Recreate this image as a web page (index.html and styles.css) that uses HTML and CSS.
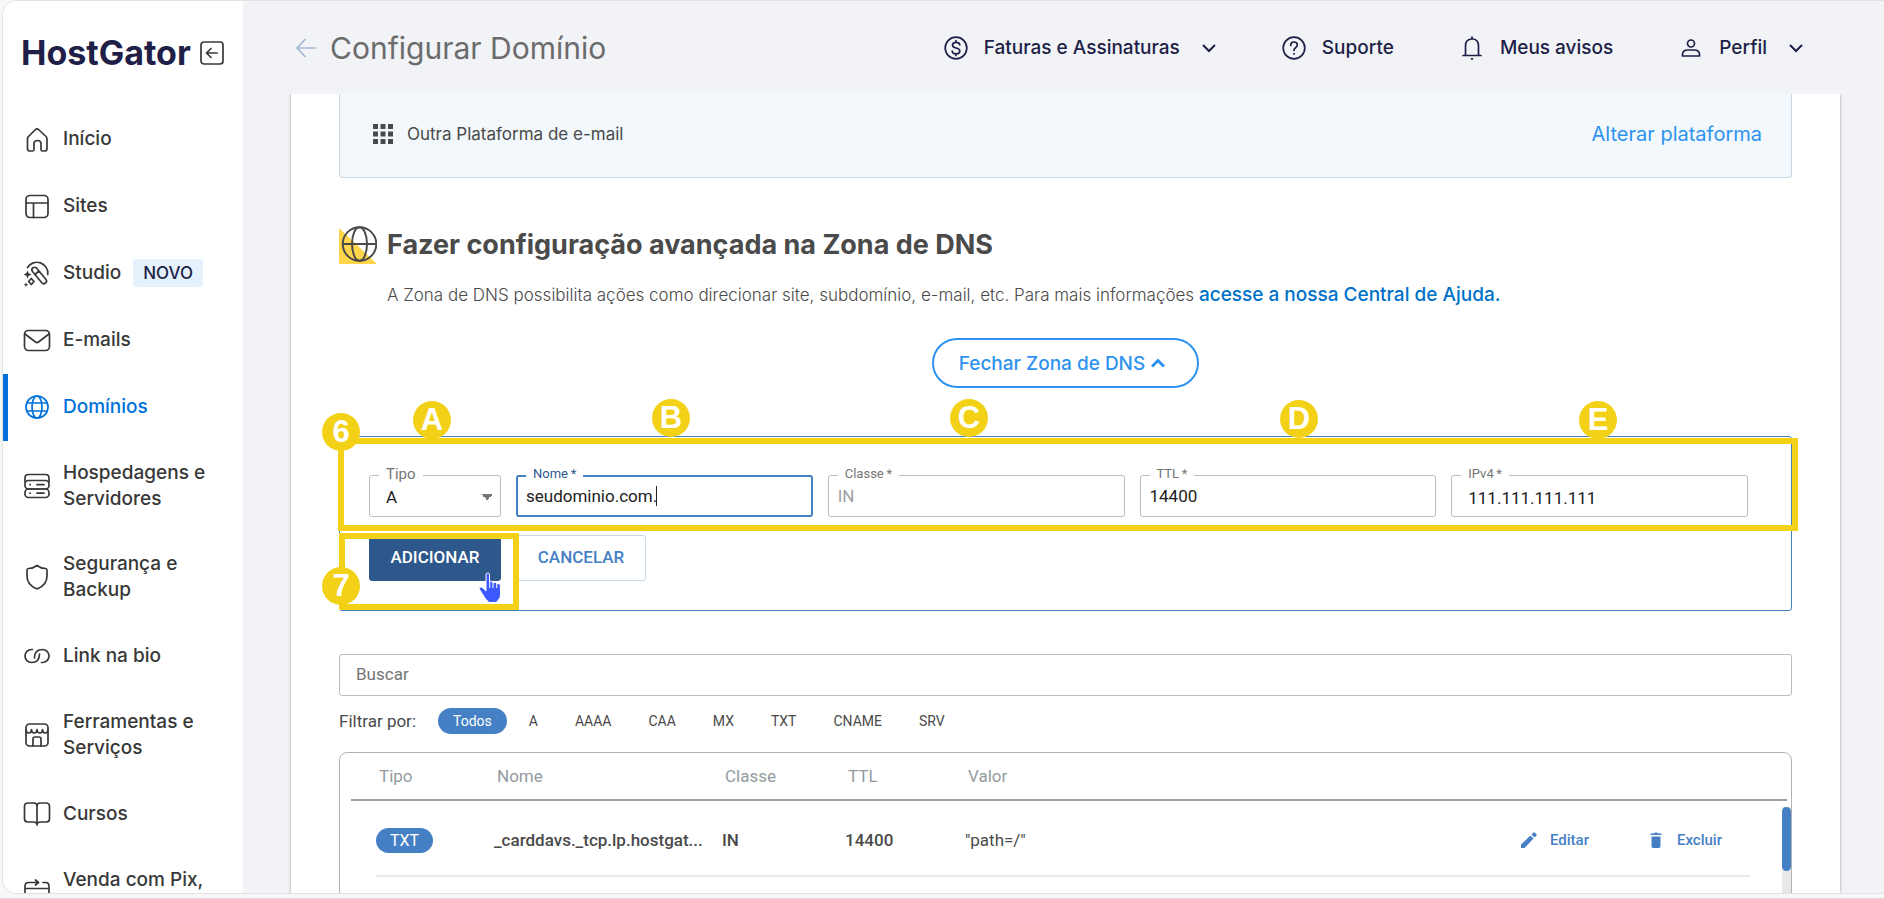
FILE: index.html
```html
<!DOCTYPE html>
<html lang="pt-BR">
<head>
  <meta charset="UTF-8">
  <meta name="viewport" content="width=device-width, initial-scale=1">
  <title>Configurar Domínio - HostGator</title>
  <link rel="stylesheet" href="styles.css">
</head>
<body>

  <div class="app">

    <aside class="sidebar">
      <div class="brand">
        <a href="#" class="logo">HostGator</a>
        <button type="button" class="icon-btn" aria-label="Recolher menu">
          <svg class="icon" viewBox="0 0 24 24"><rect x="1" y="1" width="22" height="22" rx="3"/><path d="M17 12H7M11 7.500L6.500 12l4.500 4.500"/></svg>
        </button>
      </div>

      <nav class="menu">
        <a href="#" class="menu-item">
          <svg class="icon" viewBox="0 0 28 28"><path d="M5 12L12.500 4.500Q14 3.200 15.500 4.500L23 11.500Q24 12.500 24 14V23.500Q24 26 21.500 26H19.500Q18 26 18 24.500V18.500Q18 15.500 14.500 15.500Q11 15.500 11 18.500V24.500Q11 26 9.500 26H7Q4.500 26 4.500 23.500V14Q4.500 12.700 5 12Z"/></svg>
          <span>Início</span>
        </a>
        <a href="#" class="menu-item">
          <svg class="icon" viewBox="0 0 28 28"><rect x="3" y="3.500" width="22" height="22" rx="4"/><path d="M3 11H25M10.500 11V25.500"/></svg>
          <span>Sites</span>
        </a>
        <a href="#" class="menu-item">
          <svg class="icon" viewBox="0 0 28 28"><path d="M4.500 8.500A11 11 0 0 1 24.800 15.500M9.500 12.500L19 24Q20.500 25.500 22.500 24Q24.500 22.500 23 20.500L13.500 9Q11.500 7.500 9.700 9Q8 10.500 9.500 12.500ZM12.500 15L16 11.800M8.300 19.500L11 22.500L8.300 25.500L5.600 22.500Z"/><path class="fill" d="M4.500 11.500l1.200 2.800 2.800 1.200-2.800 1.200-1.200 2.800-1.200-2.800L.5 15.500l2.800-1.200zM3 23.500l.7 1.500 1.500.7-1.500.7-.7 1.500-.7-1.500-1.500-.7 1.500-.7z"/></svg>
          <span>Studio</span>
          <span class="tag">NOVO</span>
        </a>
        <a href="#" class="menu-item">
          <svg class="icon" viewBox="0 0 28 28"><rect x="1.500" y="4.500" width="25" height="20" rx="4"/><path d="M2 8L12.500 16Q14 17.200 15.500 16L26 8"/></svg>
          <span>E-mails</span>
        </a>
        <a href="#" class="menu-item active">
          <svg class="icon" viewBox="0 0 28 28"><circle cx="14" cy="14" r="11"/><ellipse cx="14" cy="14" rx="5" ry="11"/><path d="M4 10H24M4 18H24"/></svg>
          <span>Domínios</span>
        </a>
        <a href="#" class="menu-item">
          <svg class="icon" viewBox="0 0 28 28"><path d="M2 10V6Q2 2.500 5.500 2.500H22.500Q26 2.500 26 6V10"/><rect x="2" y="8.500" width="24" height="8.500" rx="3.500"/><rect x="2" y="17" width="24" height="8.500" rx="3.500"/><path d="M7 12.700H7.200M14 12.700H21M7 21.200H7.200M14 21.200H21"/></svg>
          <span>Hospedagens e Servidores</span>
        </a>
        <a href="#" class="menu-item">
          <svg class="icon" viewBox="0 0 28 28"><path d="M14 2.500Q18 5.500 22.500 5.500Q24 5.700 24 7.500V13Q24 21.500 15 25.500Q14 26 13 25.500Q4 21.500 4 13V7.500Q4 5.700 5.500 5.500Q10 5.500 14 2.500Z"/></svg>
          <span>Segurança e Backup</span>
        </a>
        <a href="#" class="menu-item">
          <svg class="icon" viewBox="0 0 28 28"><path d="M9.500 7.500H8.500A6.500 6.500 0 0 0 8.500 20.500Q16.500 20.500 16.500 12M18.500 20.500H19.500A6.500 6.500 0 0 0 19.500 7.500Q11.500 7.500 11.500 16"/></svg>
          <span>Link na bio</span>
        </a>
        <a href="#" class="menu-item">
          <svg class="icon" viewBox="0 0 28 28"><rect x="3" y="3" width="22" height="22" rx="3.500"/><path d="M3 9Q3 12 5.800 12Q8.500 12 8.500 8.500Q8.500 12 11.200 12Q14 12 14 8.500Q14 12 16.800 12Q19.500 12 19.500 8.500Q19.500 12 22.200 12Q25 12 25 9M10 25V18Q10 16 12 16H16Q18 16 18 18V25"/></svg>
          <span>Ferramentas e Serviços</span>
        </a>
        <a href="#" class="menu-item">
          <svg class="icon" viewBox="0 0 28 28"><path d="M14 6Q14 3 11 3H5Q1.500 3 1.500 6.500V19Q1.500 22 5 22H10Q14 22 14 25Q14 22 18 22H23Q26.500 22 26.500 19V6.500Q26.500 3 23 3H17Q14 3 14 6ZM14 6V25"/></svg>
          <span>Cursos</span>
        </a>
        <a href="#" class="menu-item">
          <svg class="icon" viewBox="0 0 28 28"><path d="M2 8.500V7Q2 3.500 5.500 3.500H15M12.500 1L15.500 3.500L12.500 6M20 3.500H22.500Q26 3.500 26 7V8.500M2 9.500H26V22Q26 25 23 25H5Q2 25 2 22Z"/></svg>
          <span>Venda com Pix, Boleto</span>
        </a>
      </nav>
    </aside>

    <div class="page">
      <header class="topbar">
        <a href="#" class="back" aria-label="Voltar">
          <svg class="icon" viewBox="0 0 20 20"><path d="M19 10H1.500M9 1.500L1 10l8 8.500"/></svg>
        </a>
        <h1>Configurar Domínio</h1>
        <nav class="top-links">
          <a href="#">
            <svg class="icon" viewBox="0 0 24 24"><circle cx="12" cy="12" r="10.800"/><path d="M15.800 9Q15.500 6.300 12 6.300Q8.500 6.300 8.500 9Q8.500 11.300 12 12Q15.800 12.800 15.800 15Q15.800 17.800 12 17.800Q8.300 17.800 8.200 15M12 4.500V6.300M12 17.800V19.500"/></svg>
            <span>Faturas e Assinaturas</span>
            <svg class="chevron" viewBox="0 0 14 14"><path d="M1 4l6 6 6-6"/></svg>
          </a>
          <a href="#">
            <svg class="icon" viewBox="0 0 24 24"><circle cx="12" cy="12" r="10.800"/><path d="M8.700 9.500Q8.700 6 12 6Q15.300 6 15.300 9Q15.300 10.500 13.500 11.700Q12 12.700 12 14.500M12 17.500V18"/></svg>
            <span>Suporte</span>
          </a>
          <a href="#">
            <svg class="icon" viewBox="0 0 24 24"><path d="M12 1V3M12 3Q5.500 3 5.500 10V19.500H18.500V10Q18.500 3 12 3ZM3 19.500H21M11.500 22.800H12.500"/></svg>
            <span>Meus avisos</span>
          </a>
          <a href="#">
            <svg class="icon" viewBox="0 0 24 24"><circle cx="12" cy="7.500" r="3.500"/><path d="M3.500 20V18.500Q3.500 14 9 14H15Q20.500 14 20.500 18.500V20Z"/></svg>
            <span>Perfil</span>
            <svg class="chevron" viewBox="0 0 14 14"><path d="M1 4l6 6 6-6"/></svg>
          </a>
        </nav>
      </header>

      <main class="card">
        <div class="platform">
          <svg class="grid-icon" viewBox="0 0 20 20"><path d="M0 0h5v5H0zM7.500 0h5v5h-5zM15 0h5v5h-5zM0 7.500h5v5H0zM7.500 7.500h5v5h-5zM15 7.500h5v5h-5zM0 15h5v5H0zM7.500 15h5v5h-5zM15 15h5v5h-5z"/></svg>
          <span>Outra Plataforma de e-mail</span>
          <a href="#">Alterar plataforma</a>
        </div>

        <section class="dns">
          <div class="dns-title">
            <svg class="globe" viewBox="0 0 38 38"><path class="accent" d="M0 2L38 38H0Z"/><circle cx="20.500" cy="18" r="16.800"/><ellipse cx="20.500" cy="18" rx="7.500" ry="16.800"/><path d="M3.700 18H37.300"/></svg>
            <h2>Fazer configuração avançada na Zona de DNS</h2>
          </div>
          <p class="dns-text">A Zona de DNS possibilita ações como direcionar site, subdomínio, e-mail, etc. Para mais informações <a href="#">acesse a nossa Central de Ajuda.</a></p>
          <button type="button" class="toggle">
            Fechar Zona de DNS
            <svg viewBox="0 0 14 10"><path d="M1 8.500l6-6 6 6"/></svg>
          </button>
        </section>

        <form class="record-form">
          <div class="fields">
            <div class="field small">
              <label for="tipo">Tipo</label>
              <select id="tipo"><option>A</option><option>AAAA</option><option>CNAME</option><option>MX</option></select>
            </div>
            <div class="field focused">
              <label for="nome">Nome&thinsp;*</label>
              <input type="text" id="nome" value="seudominio.com.">
              <span class="caret"></span>
            </div>
            <div class="field">
              <label for="classe">Classe&thinsp;*</label>
              <input type="text" id="classe" value="IN" disabled>
            </div>
            <div class="field">
              <label for="ttl">TTL&thinsp;*</label>
              <input type="text" id="ttl" value="14400">
            </div>
            <div class="field wide-pad">
              <label for="ipv4">IPv4&thinsp;*</label>
              <input type="text" id="ipv4" value="111.111.111.111">
            </div>
          </div>
          <div class="actions">
            <button type="button" class="btn btn-primary">Adicionar</button>
            <button type="button" class="btn">Cancelar</button>
          </div>

          <!-- tutorial marks over the form -->
          <div class="frame frame-fields"></div>
          <div class="frame frame-add"></div>
          <span class="mark mark-6">6</span>
          <span class="mark mark-7">7</span>
          <span class="mark mark-a">A</span>
          <span class="mark mark-b">B</span>
          <span class="mark mark-c">C</span>
          <span class="mark mark-d">D</span>
          <span class="mark mark-e">E</span>
          <svg class="pointer" viewBox="0 0 26 32"><path d="M8 2.500Q8 1 9.800 1Q11.500 1 11.500 2.500V10Q12 9 13.500 9.300Q15 9.500 15 11Q16 10 17.300 10.300Q18.800 10.800 18.800 12Q19.500 11.300 20.800 11.600Q22.500 12 22.500 14V23Q22.500 26 20 28.500L18 30.500H11Q7 27 5 23L1.500 17.500Q.8 16 2.200 15.300Q3.700 14.700 5 16L8 19Z"/><path class="knuckles" d="M11.700 10v6M15 11v5M18.800 12v4"/></svg>
        </form>

        <input type="search" class="search" placeholder="Buscar" aria-label="Buscar">

        <div class="filters">
          <span>Filtrar por:</span>
          <button type="button" class="selected">Todos</button>
          <button type="button">A</button>
          <button type="button">AAAA</button>
          <button type="button">CAA</button>
          <button type="button">MX</button>
          <button type="button">TXT</button>
          <button type="button">CNAME</button>
          <button type="button">SRV</button>
        </div>

        <div class="records">
          <table>
            <thead>
              <tr>
                <td class="col-edge"></td>
                <th class="col-type">Tipo</th>
                <th class="col-name">Nome</th>
                <th class="col-class">Classe</th>
                <th class="col-ttl">TTL</th>
                <th>Valor</th>
                <td class="col-edit"></td>
                <td class="col-delete"></td>
                <td class="col-end"></td>
              </tr>
            </thead>
            <tbody>
              <tr>
                <td class="edge"></td>
                <td><span class="chip">TXT</span></td>
                <td class="strong">_carddavs._tcp.lp.hostgat...</td>
                <td class="strong">IN</td>
                <td class="strong">14400</td>
                <td>"path=/"</td>
                <td><a href="#" class="action"><svg viewBox="0 0 16 16"><path d="M0 12.500V16h3.500L12.500 6.500 9.500 3.500zM10.500 2.500l3 3L15.500 3.500Q16 3 15.500 2.300L13.700.5Q13 0 12.500.5z"/></svg>Editar</a></td>
                <td><a href="#" class="action"><svg viewBox="0 0 16 16"><path d="M3.500 4.500h9V14Q12.500 16 11 16H5Q3.500 16 3.500 14zM2.500 1.500h3.500L7 .5h2l1 1h3.500V3h-11z"/></svg>Excluir</a></td>
                <td class="edge"></td>
              </tr>
              <tr class="next">
                <td class="edge"></td>
                <td></td>
                <td></td>
                <td></td>
                <td></td>
                <td>server.lp.br</td>
                <td></td>
                <td></td>
                <td class="edge"></td>
              </tr>
            </tbody>
          </table>
          <div class="scrollbar"><div class="thumb"></div></div>
        </div>
      </main>
    </div>

  </div>

</body>
</html>
```
FILE: styles.css
```css
* { box-sizing: border-box; }

body {
  display: flex;
  flex-direction: column;
  height: 100vh;
  margin: 0;
  padding: 1px 0 5px 3px;
  overflow: hidden;
  background: #f7f7f7;
  border-bottom: 1px solid #dcdcdc;
  font-family: Inter, "Noto Sans", sans-serif;
  color: #383838;
}

a { color: inherit; text-decoration: none; }
button, input, select { font: inherit; }
button { cursor: pointer; }
svg { flex: none; fill: none; stroke: currentColor; }

.app {
  display: flex;
  flex: 1;
  min-height: 0;
  overflow: hidden;
  background: #f1f3f7;
  border-radius: 14px 0 0 14px;
  box-shadow: 0 0 0 1px #e2e2e2;
}

/* sidebar */
.sidebar {
  width: 240px;
  flex: none;
  overflow: hidden;
  background: #fff;
}
.brand {
  display: flex;
  align-items: center;
  justify-content: space-between;
  height: 105px;
  padding: 0 19px 2px 18px;
}
.logo {
  font-size: 34px;
  font-weight: 700;
  line-height: 40px;
  color: #1f1f47;
}
.icon-btn {
  padding: 0;
  border: 0;
  background: none;
  color: #383838;
}
.icon-btn .icon { display: block; width: 24px; height: 24px; }
.icon {
  stroke-width: 1.7;
  stroke-linecap: round;
  stroke-linejoin: round;
}
.icon .fill { fill: currentColor; stroke: none; }

.menu-item {
  display: flex;
  align-items: center;
  gap: 12px;
  min-height: 67px;
  padding: 19px 16px 20px 20px;
  font-size: 19px;
  font-weight: 500;
  line-height: 26px;
}
.menu-item .icon { width: 28px; height: 28px; }
.menu-item.active {
  padding-left: 15px;
  border-left: 5px solid #0071d9;
  border-radius: 0 3px 3px 0;
  color: #0071d9;
}
.tag {
  padding: 1px 10px;
  border-radius: 4px;
  background: #e5f2fd;
  color: #1f1f47;
  font-size: 17px;
}

/* top bar */
.page {
  display: flex;
  flex: 1;
  flex-direction: column;
  min-width: 0;
}
.topbar {
  display: flex;
  align-items: center;
  flex: none;
  height: 93px;
  padding: 0 81px 0 53px;
}
.back { color: #a3b5d4; }
.back .icon { display: block; width: 20px; height: 20px; }
h1 {
  margin: 0 0 0 14px;
  font-size: 30px;
  font-weight: 400;
  color: #6b6b6b;
}
.top-links {
  display: flex;
  gap: 66px;
  margin-left: auto;
  font-size: 19px;
  font-weight: 500;
  color: #1f1f47;
}
.top-links a { display: flex; align-items: center; gap: 16px; white-space: nowrap; }
.top-links .icon { width: 24px; height: 24px; }
.chevron { width: 14px; height: 14px; margin-left: 6px; stroke-width: 2; }

/* content */
.card {
  flex: 1;
  min-height: 0;
  margin: 0 44px 0 48px;
  padding: 0 48px;
  overflow: hidden;
  background: #fff;
  box-shadow: 0 0 3px rgba(0, 0, 0, 0.35);
  clip-path: inset(0 -4px);
}
.platform {
  display: flex;
  align-items: center;
  gap: 14px;
  padding: 25px 29px 28px 33px;
  border: 1px solid #c8d6df;
  border-top: 0;
  border-radius: 0 0 4px 4px;
  background: #f2f8fc;
  font-size: 17px;
  line-height: 30px;
  color: #4a4a4a;
}
.platform a { margin-left: auto; font-size: 20px; color: #2e93ee; }
.grid-icon { width: 20px; height: 20px; fill: #4a4a4a; stroke: none; }

.dns { padding: 48px 0; color: #4a4a4a; }
.dns-title { display: flex; align-items: center; gap: 10px; }
.globe { width: 38px; height: 38px; stroke-width: 2; }
.globe .accent { fill: #ffd54a; stroke: none; }
h2 { margin: 0; font-size: 27px; font-weight: 700; line-height: 38px; }
.dns-text {
  margin: 19px 0 31px 48px;
  font-size: 17px;
  font-weight: 300;
  line-height: 24px;
}
.dns-text a { color: #0071c9; font-size: 19px; font-weight: 500; }
.toggle {
  display: flex;
  align-items: center;
  gap: 6px;
  height: 50px;
  margin: 0 auto;
  padding: 0 32px 0 25px;
  border: 2px solid #2e93ee;
  border-radius: 25px;
  background: #fff;
  color: #2e93ee;
  font-size: 19px;
  font-weight: 500;
}
.toggle svg { width: 14px; height: 10px; stroke-width: 3; }

.record-form, .search, .filters, .records { font-family: Roboto, sans-serif; }

.record-form {
  position: relative;
  padding: 38px 43px 29px 29px;
  border: 1px solid #4580c5;
  border-radius: 3px;
}
.fields { display: flex; gap: 15px; }
.field { position: relative; flex: 1; min-width: 0; }
.field.small { flex: 0 0 132px; }
.field input, .field select {
  display: block;
  width: 100%;
  height: 42px;
  padding: 0 9px;
  border: 1px solid #bdbdbd;
  border-radius: 3px;
  outline: 0;
  background: #fff;
  color: #212121;
  font-size: 17px;
}
.field input:disabled { color: #9e9e9e; }
.field label {
  position: absolute;
  top: -9px;
  left: 10px;
  padding: 0 7px;
  background: #fff;
  color: #757575;
  font-size: 13px;
  line-height: 16px;
}
.field.small label { font-size: 15px; }
.field select {
  appearance: none;
  padding: 2px 16px 0 16px;
  background: linear-gradient(to bottom right, #757575 50%, transparent 50%) 117px 18px / 6px 6px no-repeat,
    linear-gradient(to bottom left, #757575 50%, transparent 50%) 111px 18px / 6px 6px no-repeat;
}
.field.focused input { padding: 0 8px; border: 2px solid #4580c5; }
.field.focused label { color: #2e588c; }
.field.wide-pad input { padding: 3px 16px 0; }
.caret {
  position: absolute;
  top: 11px;
  left: 140px;
  width: 1px;
  height: 20px;
  background: #212121;
}

.actions { display: flex; gap: 15px; margin-top: 18px; }
.btn {
  min-width: 130px;
  height: 46px;
  padding: 0 0 2px;
  border: 1px solid #c8d8e4;
  border-radius: 3px;
  background: #fff;
  color: #4580c5;
  font-size: 17px;
  font-weight: 500;
  text-transform: uppercase;
}
.btn-primary { width: 132px; border-color: #2e588c; background: #2e588c; color: #fff; }

.frame { position: absolute; border: 6px solid #f3d117; }
.frame-fields { top: 1px; left: -2px; right: -7px; height: 93px; }
.frame-add { top: 96px; left: -1px; width: 180px; height: 77px; }
.mark {
  position: absolute;
  width: 38px;
  height: 38px;
  border-radius: 50%;
  background: #f3d117;
  color: #fff;
  font: bold 31px/38px "Liberation Sans", sans-serif;
  text-align: center;
}
.mark-6 { top: -24px; left: -18px; }
.mark-7 { top: 130px; left: -18px; }
.mark-a { top: -36px; left: 73px; }
.mark-b { top: -38px; left: 312px; }
.mark-c { top: -38px; left: 610px; }
.mark-d { top: -37px; left: 940px; }
.mark-e { top: -36px; left: 1239px; }
.pointer {
  position: absolute;
  top: 135px;
  left: 138px;
  width: 26px;
  height: 32px;
  fill: #3d5afe;
  stroke: #fff;
  stroke-width: 1;
}

.search {
  display: block;
  width: 100%;
  height: 42px;
  margin-top: 43px;
  padding: 0 16px 2px;
  border: 1px solid #bdbdbd;
  border-radius: 3px;
  outline: 0;
  font-size: 17px;
}
.search::placeholder { color: #757575; opacity: 1; }

.filters {
  display: flex;
  align-items: center;
  margin: 12px 0 18px;
  color: #4a4a4a;
  font-size: 17px;
}
.filters span { margin-right: 22px; line-height: 20px; }
.filters button {
  height: 26px;
  margin-right: 7px;
  padding: 0 15px;
  border: 0;
  border-radius: 13px;
  background: none;
  color: #4a4a4a;
  font-size: 14px;
}
.filters .selected { background: #4580c5; color: #fff; }

/* records table */
.records {
  position: relative;
  padding: 0 4px 0 11px;
  border: 1px solid #b0b4b7;
  border-radius: 8px 8px 0 0;
}
table {
  width: 100%;
  table-layout: fixed;
  border-collapse: collapse;
  color: #4a4a4a;
  font-size: 17px;
}
thead th, thead td { height: 47px; border-bottom: 2px solid #98a2a8; }
th { padding: 0 3px; color: #939ba0; font-weight: 400; text-align: left; }
td { padding: 0; white-space: nowrap; }
tbody td { height: 76px; padding-top: 4px; border-bottom: 2px solid #e8e8e8; }
tbody td.edge { border-bottom: 0; }
.strong { font-weight: 500; }
.col-edge { width: 25px; }
.col-type { width: 118px; }
.col-name { width: 228px; }
.col-class { width: 123px; }
.col-ttl { width: 120px; }
.col-edit { width: 127px; }
.col-delete { width: 102px; }
.col-end { width: 37px; }
.chip {
  display: inline-block;
  padding: 0 14px;
  border-radius: 13px;
  background: #4580c5;
  color: #fff;
  font-size: 16px;
  line-height: 25px;
}
.action {
  display: flex;
  align-items: center;
  gap: 13px;
  color: #4580c5;
  font-size: 15px;
  font-weight: 500;
}
.action svg { width: 16px; height: 16px; fill: #4580c5; stroke: none; }
.next td { padding-top: 12px; vertical-align: top; }
.scrollbar {
  position: absolute;
  top: 54px;
  right: 0;
  bottom: 0;
  width: 9px;
  background: #e8e8e8;
}
.thumb { height: 64px; border-radius: 5px; background: #4580c5; }
```
